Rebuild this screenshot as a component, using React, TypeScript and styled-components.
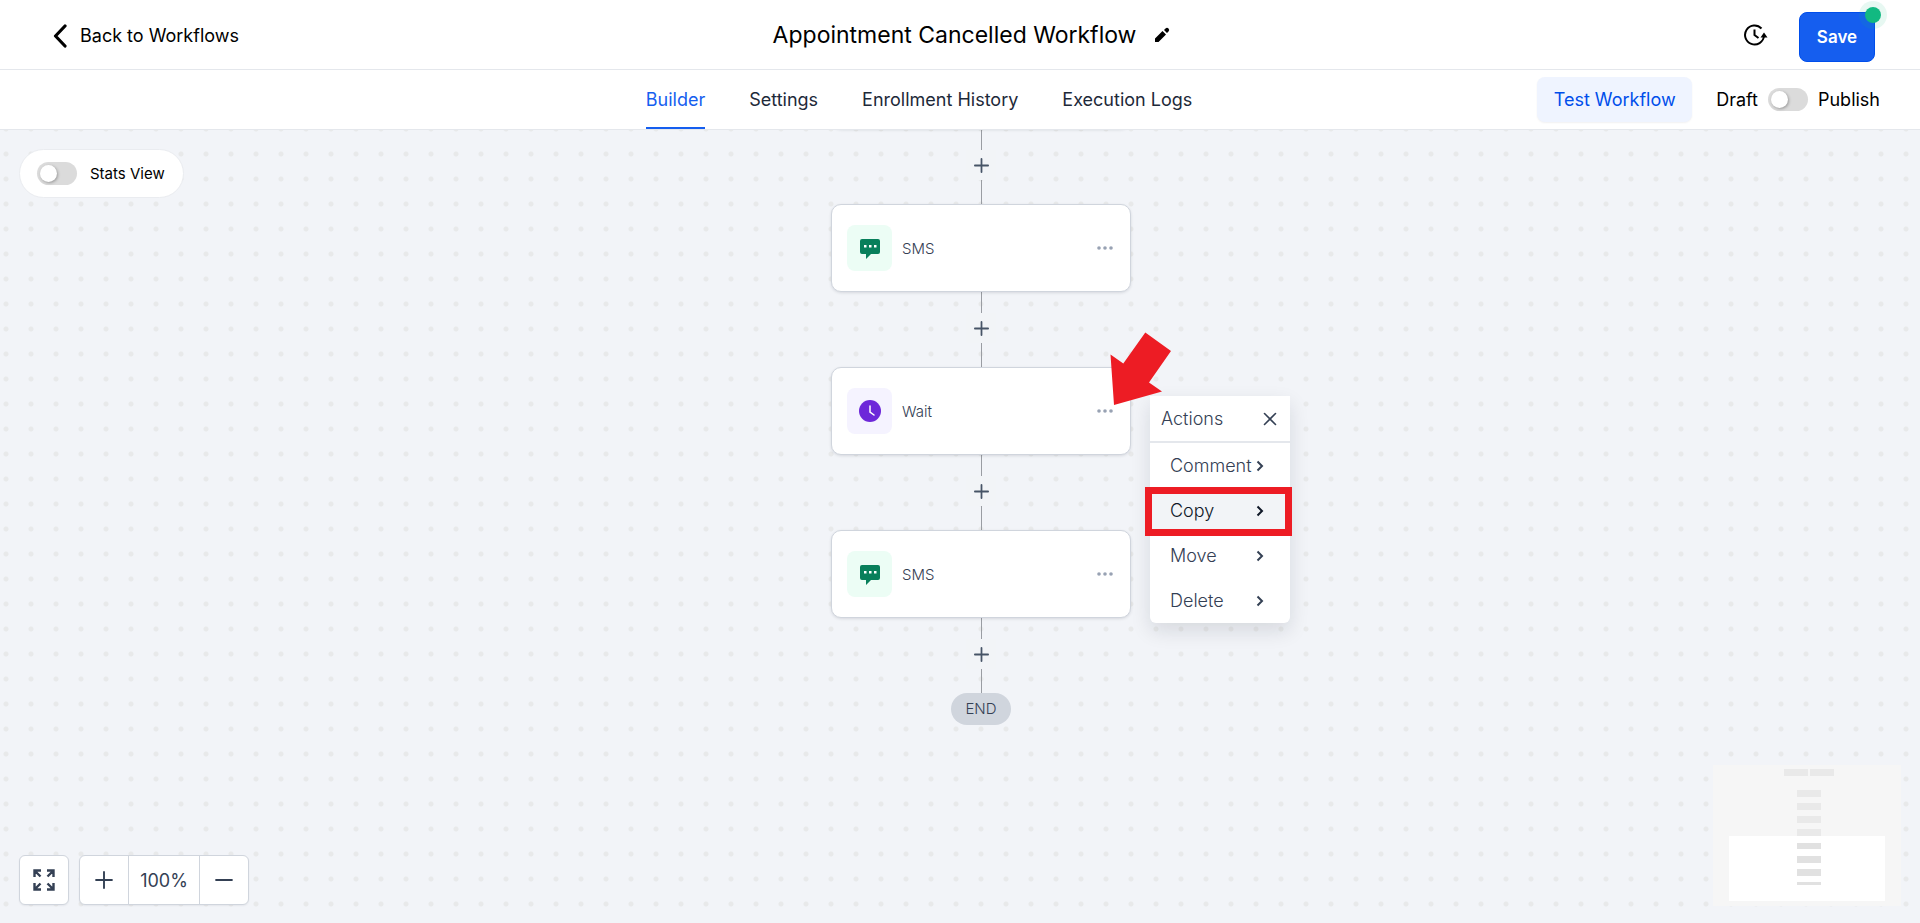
import React from "react";
import styled, { createGlobalStyle, css } from "styled-components";

const GlobalStyle = createGlobalStyle`
  *, *::before, *::after { box-sizing: border-box; }
  body { margin: 0; background: #f2f4f8; color: #000; font-family: Inter, "Liberation Sans", sans-serif; }
  button, input { font-family: inherit; margin: 0; }
`;

const Page = styled.div`
  display: flex;
  flex-direction: column;
  min-height: 100vh;
`;

const Bar = styled.header`
  display: grid;
  grid-template-columns: 1fr auto 1fr;
  align-items: center;
  height: 70px;
  background: #fff;
  border-bottom: 1px solid #e4e7ec;
`;

const BackLink = styled.a`
  display: flex;
  align-items: center;
  gap: 13px;
  padding: 2px 0 0 53px;
  font-size: 18px;
  line-height: 28px;
  color: #000;
  text-decoration: none;
`;

const TitleGroup = styled.div`
  display: flex;
  align-items: center;
  gap: 16px;
  padding-left: 25px;
`;

const Title = styled.h1`
  margin: 0;
  font-size: 23px;
  line-height: 32px;
  font-weight: 400;
`;

const IconButton = styled.button`
  display: flex;
  align-items: center;
  justify-content: center;
  padding: 0;
  border: 0;
  background: none;
  color: inherit;
  cursor: pointer;
`;

const BarActions = styled.div`
  display: flex;
  align-items: center;
  justify-content: flex-end;
  gap: 30px;
  padding-right: 45px;
`;

const SaveWrap = styled.div`
  position: relative;
  padding-top: 4px;
`;

const SaveButton = styled.button`
  display: block;
  width: 76px;
  height: 50px;
  border: 1px solid #004eeb;
  border-radius: 8px;
  background: #155eef;
  color: #fff;
  font-size: 17px;
  font-weight: 600;
  padding: 0;
`;

const UnsavedDot = styled.span`
  position: absolute;
  top: -7px;
  right: -12px;
  width: 28px;
  height: 28px;
  border: 6px solid rgba(18, 183, 129, 0.1);
  border-radius: 50%;
  background: #12b981;
  background-clip: padding-box;
`;

const TabBar = styled.div`
  display: grid;
  grid-template-columns: 1fr auto 1fr;
  align-items: center;
  height: 60px;
  background: #fff;
  border-bottom: 1px solid #e4e7ec;
`;

const Tabs = styled.nav`
  grid-column: 2;
  display: flex;
  gap: 44px;
  height: 59px;
  padding-right: 82px;
`;

const Tab = styled.a<{ $active?: boolean }>`
  display: flex;
  align-items: center;
  font-size: 18px;
  padding-top: 2px;
  border-bottom: 2px solid ${(p) => (p.$active ? "#155eef" : "transparent")};
  color: ${(p) => (p.$active ? "#155eef" : "#1d2939")};
  text-decoration: none;
`;

const TabActions = styled.div`
  display: flex;
  align-items: center;
  justify-content: flex-end;
  gap: 24px;
  padding-right: 40px;
`;

const TestButton = styled.button`
  width: 155px;
  height: 45px;
  padding: 0;
  border: 0;
  border-radius: 8px;
  background: #eff4ff;
  box-shadow: 0 1px 2px rgba(16, 24, 40, 0.06);
  color: #004eeb;
  font-size: 18px;
`;

const PublishState = styled.label`
  display: flex;
  align-items: center;
  gap: 10px;
  font-size: 18px;
`;

const Switch = styled.input`
  appearance: none;
  width: 40px;
  height: 23px;
  border-radius: 12px;
  background: #dbdbdb;
  display: flex;
  align-items: center;
  padding: 0 3px;

  &::before {
    content: "";
    width: 17px;
    height: 17px;
    border-radius: 50%;
    background: #fff;
    box-shadow: 1px 1px 3px rgba(0, 0, 0, 0.3);
  }
`;

const Canvas = styled.main`
  position: relative;
  flex: 1;
  overflow: hidden;
  display: flex;
  flex-direction: column;
  align-items: center;
  padding: 0 0 120px 42px;
  background-color: #f2f4f8;
  background-image: radial-gradient(circle at 13px 13px, #e8e9ea 2px, transparent 3px);
  background-size: 25px 25px;
  background-position: -7px 11px;
`;

const StatsPill = styled.label`
  position: absolute;
  top: 19px;
  left: 19px;
  display: flex;
  align-items: center;
  gap: 13px;
  height: 49px;
  padding: 0 18px 0 17px;
  border: 1px solid #eaecf0;
  border-radius: 25px;
  background: #fff;
  font-size: 15px;
`;

const NodeSlot = styled.section<{ $clipped?: boolean }>`
  position: relative;
  ${(p) => p.$clipped && css`margin-top: -89px;`}
`;

const NodeCard = styled.div`
  display: flex;
  align-items: center;
  gap: 10px;
  width: 300px;
  height: 88px;
  padding: 0 15px;
  border: 1px solid #d0d5dd;
  border-radius: 10px;
  background: #fff;
  box-shadow: 0 1px 3px rgba(16, 24, 40, 0.12);
  font-size: 15px;
  font-weight: 300;
  color: #344054;
`;

const NodeIcon = styled.span<{ $tint: string }>`
  display: flex;
  align-items: center;
  justify-content: center;
  width: 45px;
  height: 46px;
  border-radius: 8px;
  background: ${(p) => p.$tint};
`;

const NodeName = styled.span`
  flex: 1;
`;

const ConnectorColumn = styled.div`
  display: flex;
  flex-direction: column;
  align-items: center;
  width: 31px;
`;

const Line = styled.span<{ $length: number }>`
  width: 1px;
  height: ${(p) => p.$length}px;
  background: #9a9da3;
`;

const AddButton = styled(IconButton)`
  width: 30px;
  height: 30px;
  background: #f2f4f7;
  color: #475467;
`;

const EndPill = styled.div`
  width: 60px;
  line-height: 32px;
  border-radius: 16px;
  background: #d0d5dd;
  text-align: center;
  font-size: 15px;
  font-weight: 300;
  color: #344054;
`;

const Menu = styled.div`
  position: absolute;
  z-index: 1;
  top: 29px;
  left: 319px;
  width: 140px;
  border-radius: 0 0 6px 6px;
  background: #fff;
  box-shadow: 0 8px 20px rgba(16, 24, 40, 0.12);
  font-weight: 300;
  font-size: 18px;
  color: #344054;
`;

const MenuHeader = styled.div`
  display: flex;
  align-items: center;
  justify-content: space-between;
  height: 47px;
  padding: 0 13px 0 11px;
  border-bottom: 2px solid #e4e7ec;
`;

const MenuItem = styled.button<{ $current?: boolean }>`
  position: relative;
  display: flex;
  align-items: center;
  justify-content: space-between;
  width: 100%;
  height: 45px;
  padding: 0 26px 0 20px;
  border: 0;
  border-radius: 6px;
  background: ${(p) => (p.$current ? "#f2f4f7" : "none")};
  color: ${(p) => (p.$current ? "#101828" : "inherit")};
  font-size: 18px;
  font-weight: 300;
`;

const Highlight = styled.span`
  position: absolute;
  inset: -1px -2px -3px -5px;
  border: 7px solid #ed1c24;
`;

const Pointer = styled.svg`
  position: absolute;
  z-index: 2;
  top: -35px;
  left: 279px;
`;

const Controls = styled.div`
  position: absolute;
  left: 19px;
  bottom: 18px;
  display: flex;
  gap: 10px;
`;

const ControlGroup = styled.div`
  display: flex;
  height: 50px;
  border: 1px solid #d0d5dd;
  border-radius: 6px;
  background: #fff;
  box-shadow: 0 1px 2px rgba(16, 24, 40, 0.06);
  color: #344054;
`;

const ControlButton = styled(IconButton)`
  width: 48px;
`;

const ZoomLevel = styled.output`
  display: flex;
  align-items: center;
  justify-content: center;
  width: 72px;
  border: 1px solid #d0d5dd;
  border-width: 0 1px;
  font-size: 18px;
`;

const MiniMap = styled.svg`
  position: absolute;
  right: 19px;
  bottom: 17px;
`;

const SmsIcon = () => (
  <svg width="22" height="22" viewBox="0 0 22 22" aria-hidden="true">
    <path fill="#087f5b" d="M3 2h16a2 2 0 0 1 2 2v11a2 2 0 0 1-2 2h-7l-5 5v-5H3a2 2 0 0 1-2-2V4a2 2 0 0 1 2-2z" />
    <path fill="#fff" d="M5 8h2.500v2.500H5zM10 8h2.500v2.500H10zM15 8h2.500v2.500H15z" />
  </svg>
);

const WaitIcon = () => (
  <svg width="22" height="22" viewBox="0 0 22 22" aria-hidden="true">
    <circle cx="11" cy="11" r="11" fill="#6d28d9" />
    <path d="M11 6v6l4 3" fill="none" stroke="#fff" strokeWidth="1.5" strokeLinecap="round" />
  </svg>
);

const Chevron = () => (
  <svg width="8" height="12" viewBox="0 0 8 12" aria-hidden="true">
    <path d="M1.500 1.500 6 6l-4.500 4.500" fill="none" stroke="currentColor" strokeWidth="2" />
  </svg>
);

const Plus = ({ size, weight }: { size: number; weight: number }) => (
  <svg width={size} height={size} viewBox="0 0 17 17" aria-hidden="true">
    <path d="M8.500 1v15M1 8.500h15" stroke="currentColor" strokeWidth={weight} strokeLinecap="round" />
  </svg>
);

const Connector = () => (
  <ConnectorColumn>
    <Line $length={21} />
    <AddButton aria-label="Add step"><Plus size={15} weight={2} /></AddButton>
    <Line $length={24} />
  </ConnectorColumn>
);

const kinds = {
  SMS: { tint: "#ecfdf5", Icon: SmsIcon },
  Wait: { tint: "#f5f3ff", Icon: WaitIcon },
};

const Node = ({ name, clipped, children }: { name: keyof typeof kinds; clipped?: boolean; children?: React.ReactNode }) => {
  const { tint, Icon } = kinds[name];
  return (
    <NodeSlot $clipped={clipped}>
      <NodeCard>
        {!clipped && (
          <>
            <NodeIcon $tint={tint}><Icon /></NodeIcon>
            <NodeName>{name}</NodeName>
            <IconButton aria-label={`${name} options`}>
              <svg width="20" height="6" viewBox="0 0 20 6" fill="#98a2b3">
                <circle cx="4" cy="3" r="1.800" /><circle cx="10" cy="3" r="1.800" /><circle cx="16" cy="3" r="1.800" />
              </svg>
            </IconButton>
          </>
        )}
      </NodeCard>
      {children}
    </NodeSlot>
  );
};

const actions = ["Comment", "Copy", "Move", "Delete"];

export default function App() {
  return (
    <Page>
      <GlobalStyle />
      <Bar>
        <BackLink href="#workflows">
          <svg width="14" height="24" viewBox="0 0 14 24" aria-hidden="true">
            <path d="M12 2 2.500 12 12 22" fill="none" stroke="#000" strokeWidth="3.200" strokeLinecap="round" strokeLinejoin="round" />
          </svg>
          Back to Workflows
        </BackLink>
        <TitleGroup>
          <Title>Appointment Cancelled Workflow</Title>
          <IconButton aria-label="Rename workflow">
            <svg width="20" height="20" viewBox="0 0 20 20">
              <path d="M3 17v-3.500L10.500 6l3.500 3.500L6.500 17zM12 5l1.500-1.500a2 2 0 0 1 3 3L15 8z" />
            </svg>
          </IconButton>
        </TitleGroup>
        <BarActions>
          <IconButton aria-label="Version history">
            <svg width="26" height="26" viewBox="0 0 26 26" fill="none" stroke="#000" strokeWidth="2">
              <path d="M18.500 6.500A9.500 9.500 0 1 0 21 14M11.500 7.500V13l4 3" />
              <path d="M17.500 15.500 21 10.500l3.500 5z" fill="#000" stroke="none" />
            </svg>
          </IconButton>
          <SaveWrap>
            <SaveButton>Save</SaveButton>
            <UnsavedDot />
          </SaveWrap>
        </BarActions>
      </Bar>
      <TabBar>
        <Tabs>
          <Tab href="#builder" $active>Builder</Tab>
          <Tab href="#settings">Settings</Tab>
          <Tab href="#enrollment">Enrollment History</Tab>
          <Tab href="#logs">Execution Logs</Tab>
        </Tabs>
        <TabActions>
          <TestButton>Test Workflow</TestButton>
          <PublishState>
            Draft
            <Switch type="checkbox" />
            Publish
          </PublishState>
        </TabActions>
      </TabBar>
      <Canvas>
        <StatsPill>
          <Switch type="checkbox" />
          Stats View
        </StatsPill>
        <Node name="Wait" clipped />
        <Connector />
        <Node name="SMS" />
        <Connector />
        <Node name="Wait">
          <Pointer width="62" height="74" viewBox="0 0 62 74" aria-hidden="true">
            <path d="M35.300.5 61 19 39 50.500l13 9L4 73 .5 22.500l12.800 9z" fill="#ed1c24" />
          </Pointer>
          <Menu>
            <MenuHeader>
              Actions
              <IconButton aria-label="Close actions">
                <svg width="14" height="14" viewBox="0 0 14 14">
                  <path d="m1.500 1.500 11 11m0-11-11 11" stroke="#344054" strokeWidth="1.600" strokeLinecap="round" />
                </svg>
              </IconButton>
            </MenuHeader>
            {actions.map((action) => (
              <MenuItem key={action} $current={action === "Copy"}>
                {action}
                <Chevron />
                {action === "Copy" && <Highlight />}
              </MenuItem>
            ))}
          </Menu>
        </Node>
        <Connector />
        <Node name="SMS" />
        <Connector />
        <EndPill>END</EndPill>
        <Controls>
          <ControlGroup>
            <ControlButton aria-label="Fit to screen">
              <svg width="22" height="22" viewBox="0 0 22 22" fill="none" stroke="currentColor" strokeWidth="2.400">
                <path d="M1.500 8V1.500H8M2 2l5.500 5.500M14 1.500h6.500V8M20 2l-5.500 5.500M1.500 14v6.500H8M2 20l5.500-5.500M20.500 14v6.500H14M20 20l-5.500-5.500" />
              </svg>
            </ControlButton>
          </ControlGroup>
          <ControlGroup>
            <ControlButton aria-label="Zoom in"><Plus size={18} weight={1.8} /></ControlButton>
            <ZoomLevel>100%</ZoomLevel>
            <ControlButton aria-label="Zoom out">
              <svg width="18" height="18" viewBox="0 0 17 17">
                <path d="M1 8.500h15" stroke="currentColor" strokeWidth="1.800" strokeLinecap="round" />
              </svg>
            </ControlButton>
          </ControlGroup>
        </Controls>
        <MiniMap width="188" height="141" viewBox="0 0 188 141" aria-hidden="true">
          <path fill="#f6f6f6" d="M0 0h188v141H0z" />
          <path fill="#fff" d="M16 71h156v65H16z" />
          <path fill="#e9e9e9" d="M71 4h24v7H71zM97 4h24v7H97zM84 25h24v7H84zM84 38h24v7H84zM84 51h24v7H84zM84 64h24v7H84z" />
          <path fill="#e1e1e1" d="M84 78h24v6H84zM84 91h24v7H84zM84 104h24v7H84zM84 117h24v3H84z" />
        </MiniMap>
      </Canvas>
    </Page>
  );
}
